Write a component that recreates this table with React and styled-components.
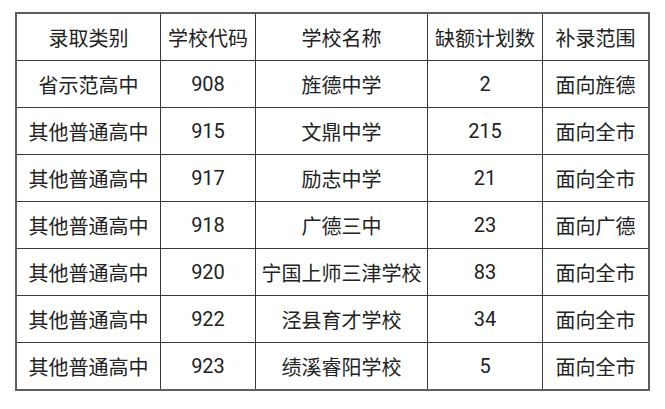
import React from "react";
import styled, { createGlobalStyle } from "styled-components";

const Global = createGlobalStyle`
  html, body { margin: 0; padding: 0; background: #fff; }
  body { font-family: Roboto, "Noto Sans CJK SC", sans-serif; }
`;

const Page = styled.div`
  width: 665px;
  height: 409px;
  box-sizing: border-box;
  padding: 12px 0 0 15px;
  background: #fff;
`;

const Grid = styled.div`
  display: grid;
  grid-template-columns: 143px 94px 171px 114px 105px;
  grid-auto-rows: 46px;
  gap: 1px;
  background: #3a3a3a;
  border: 2px solid #5e5e5e;
  width: max-content;
`;

const Cell = styled.div`
  background: #fff;
  display: flex;
  align-items: center;
  justify-content: center;
  font-size: 20px;
  color: #222;
  white-space: nowrap;
  letter-spacing: 0;
`;

const header = ["录取类别", "学校代码", "学校名称", "缺额计划数", "补录范围"];
const rows = [
  ["省示范高中", "908", "旌德中学", "2", "面向旌德"],
  ["其他普通高中", "915", "文鼎中学", "215", "面向全市"],
  ["其他普通高中", "917", "励志中学", "21", "面向全市"],
  ["其他普通高中", "918", "广德三中", "23", "面向广德"],
  ["其他普通高中", "920", "宁国上师三津学校", "83", "面向全市"],
  ["其他普通高中", "922", "泾县育才学校", "34", "面向全市"],
  ["其他普通高中", "923", "绩溪睿阳学校", "5", "面向全市"],
];

export default function App() {
  return (
    <>
      <Global />
      <Page>
        <Grid>
          {header.map((h) => (
            <Cell key={h}>{h}</Cell>
          ))}
          {rows.map((r, i) =>
            r.map((c, j) => <Cell key={`${i}-${j}`}>{c}</Cell>)
          )}
        </Grid>
      </Page>
    </>
  );
}
